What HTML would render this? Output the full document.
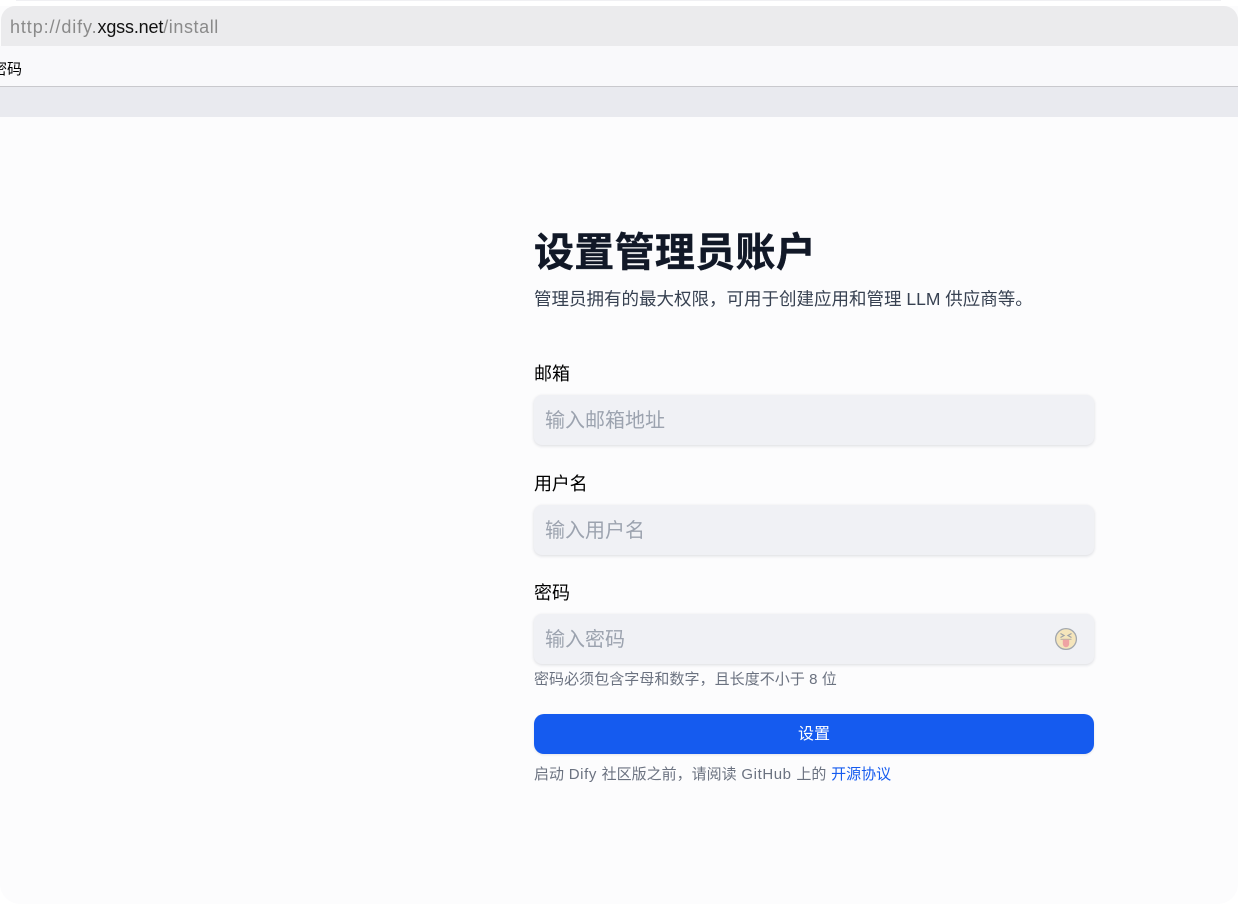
<!DOCTYPE html>
<html lang="zh-CN">
<head>
<meta charset="utf-8">
<title>Dify</title>
<style>
*{box-sizing:border-box;margin:0;padding:0}
html,body{width:1238px;height:904px;overflow:hidden;background:#fff;font-family:"Liberation Sans","Noto Sans CJK SC",sans-serif}
.a{position:absolute;white-space:nowrap}
#page{position:absolute;left:0;top:0;width:1238px;height:904px;background:#fcfcfd;border-radius:0 0 20px 20px;overflow:hidden}
.label{left:534px;font-size:18px;line-height:26px;color:#000}
.input{left:534px;width:560px;height:50px;background:#f0f1f5;border-radius:8px;box-shadow:0 1px 3px rgba(16,24,40,.14)}
.ph{left:545px;font-size:20px;line-height:30px;color:#9ca3af}
.l{letter-spacing:.58px}
</style>
</head>
<body>
<div id="page">
  <div class="a" style="left:0;top:0;width:1238px;height:6px;background:#fff"></div>
  <div class="a" style="left:16px;top:0;width:1205px;height:1px;background:#f0f0f3"></div>
  <div class="a" style="left:1px;top:6px;width:1237px;height:40px;background:#ebebed;border-radius:14px 14px 0 0"></div>
  <div class="a" style="left:10px;top:14px;font-size:18px;line-height:26px;color:#8a8a8a;letter-spacing:.9px">http://dify.<span style="color:#111;letter-spacing:-.17px">xgss.net</span><span style="letter-spacing:.58px">/install</span></div>
  <div class="a" style="left:0;top:46px;width:1238px;height:40px;background:#f9f9fb"></div>
  <div class="a" style="left:-8px;top:59px;font-size:15px;line-height:22px;color:#000">密码</div>
  <div class="a" style="left:0;top:86px;width:1238px;height:1px;background:#c9c9cd"></div>
  <div class="a" style="left:0;top:87px;width:1238px;height:30px;background:#e9eaef"></div>

  <div class="a" style="left:534px;top:229px;font-size:40px;line-height:48px;font-weight:700;color:#111827;letter-spacing:.3px;-webkit-text-stroke:.4px #111827">设置管理员账户</div>
  <div class="a" style="left:534px;top:285px;font-size:17.5px;line-height:28px;color:#374151">管理员拥有的最大权限，可用于创建应用和管理 LLM 供应商等。</div>

  <div class="a label" style="top:361px">邮箱</div>
  <div class="a input" style="top:395px"></div>
  <div class="a ph" style="top:406px">输入邮箱地址</div>

  <div class="a label" style="top:471px;letter-spacing:-.2px">用户名</div>
  <div class="a input" style="top:505px"></div>
  <div class="a ph" style="top:516px">输入用户名</div>

  <div class="a label" style="top:580px">密码</div>
  <div class="a input" style="top:614px"></div>
  <div class="a ph" style="top:625px">输入密码</div>
  <svg class="a" style="left:1054px;top:627px" width="24" height="24" viewBox="0 0 24 24">
    <circle cx="12" cy="12" r="10.4" fill="#f5e5bb" stroke="#a3a8ae" stroke-width="1.3"/>
    <path d="M6.5 6.5l3.6 2-3.6 2M17.5 6.5l-3.6 2 3.6 2" fill="none" stroke="#9ba0a6" stroke-width="1.1"/>
    <path d="M6.5 12.3h11" stroke="#b5afa3" stroke-width="1"/>
    <path d="M8.8 12.6h6.4v4.4a3.2 3.2 0 0 1-6.4 0z" fill="#efa3a3"/>
  </svg>
  <div class="a" style="left:534px;top:670px;font-size:15px;line-height:20px;color:#6b7280;letter-spacing:.05px">密码必须包含字母和数字，且长度不小于 8 位</div>

  <div class="a" style="left:534px;top:714px;width:560px;height:40px;background:#155bef;border-radius:10px;color:#fff;font-size:16px;line-height:42px;text-align:center;box-shadow:0 1px 2px rgba(16,24,40,.1)">设置</div>
  <div class="a" style="left:534px;top:765px;font-size:15px;line-height:20px;color:#6b7280">启动<span class="l"> Dify </span>社区版之前，请阅读<span class="l"> GitHub </span>上的<span class="l"> </span><span style="color:#155bef">开源协议</span></div>
</div>
</body>
</html>
